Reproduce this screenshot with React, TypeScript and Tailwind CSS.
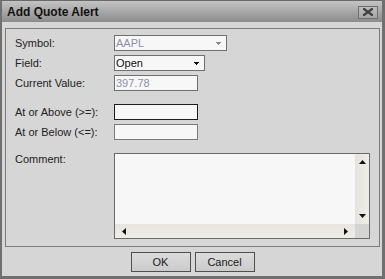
import React from "react";

const font = { fontFamily: '"Liberation Sans", Arial, sans-serif' };

function Arrow({ color }: { color: string }) {
  return (
    <svg width="5" height="3" viewBox="0 0 5 3" className="block" shapeRendering="crispEdges">
      <rect x="0" y="0" width="5" height="1" fill={color} />
      <rect x="1" y="1" width="3" height="1" fill={color} />
      <rect x="2" y="2" width="1" height="1" fill={color} />
    </svg>
  );
}

function Tri({ dir }: { dir: "up" | "down" | "left" | "right" }) {
  const pts: Record<string, string> = {
    up: "0,4 7,4 3.5,0",
    down: "0,0 7,0 3.5,4",
    left: "4,0 4,7 0,3.5",
    right: "0,0 0,7 4,3.5",
  };
  const vertical = dir === "up" || dir === "down";
  return (
    <svg width={vertical ? 7 : 4} height={vertical ? 4 : 7} viewBox={vertical ? "0 0 7 4" : "0 0 4 7"} className="block">
      <polygon points={pts[dir]} fill="#111" />
    </svg>
  );
}

function Row({ label, children }: { label: string; children: React.ReactNode }) {
  return (
    <div className="flex items-center h-[16px]">
      <div className="w-[99px] text-[11px] leading-[13px] text-[#222]">{label}</div>
      {children}
    </div>
  );
}

export default function App() {
  return (
    <div
      className="w-[385px] h-[279px] flex flex-col bg-[#d6d6d6] border-l-2 border-r-[3px] border-b-[3px] border-[#707070] overflow-hidden"
      style={font}
    >
      {/* Title bar */}
      <div className="h-[22px] shrink-0 flex items-center justify-between bg-linear-to-b from-[#c4c4c4] to-[#8c8c8c] border-t border-[#6a6a6a] pl-[5px] pr-[4px]">
        <span className="text-[12px] font-bold text-[#111] leading-[14px]">Add Quote Alert</span>
        <div className="w-[20px] h-[13px] mt-[1px] border border-[#6e6e6e] bg-linear-to-b from-[#bdbdbd] to-[#a6a6a6] flex items-center justify-center">
          <svg width="10" height="8" viewBox="0 0 10 8">
            <path d="M1 1 L9 7 M9 1 L1 7" stroke="#454545" strokeWidth="2.4" strokeLinecap="square" />
          </svg>
        </div>
      </div>

      {/* Group panel */}
      <div className="mt-[6px] ml-[3px] mr-[2px] h-[219px] border border-[#7d7d7d] pl-[9px] pt-[6px] flex flex-col">
        <div className="flex flex-col gap-[4px]">
          <Row label="Symbol:">
            <div className="w-[113px] h-[16px] border border-[#6f6f6f] bg-[#f7f7f7] flex items-center justify-between pl-[1px] pr-[5px]">
              <span className="text-[11px] leading-[13px] text-[#8d8fa8]">AAPL</span>
              <Arrow color="#8a8a8a" />
            </div>
          </Row>
          <Row label="Field:">
            <div className="w-[91px] h-[16px] border border-[#6f6f6f] bg-[#f7f7f7] flex items-center justify-between pl-[1px] pr-[5px]">
              <span className="text-[11px] leading-[13px] text-[#111]">Open</span>
              <Arrow color="#111" />
            </div>
          </Row>
          <Row label="Current Value:">
            <div className="w-[84px] h-[16px] border border-[#6f6f6f] bg-[#f7f7f7] flex items-center pl-[1px]">
              <span className="text-[11px] leading-[13px] text-[#8d8fa8]">397.78</span>
            </div>
          </Row>
        </div>

        <div className="mt-[13px] flex flex-col gap-[4px]">
          <Row label="At or Above (>=):">
            <div className="w-[84px] h-[16px] border border-[#1e1e1e] bg-[#f7f7f7]" />
          </Row>
          <Row label="At or Below (<=):">
            <div className="w-[84px] h-[16px] border border-[#7a7a7a] bg-[#f7f7f7]" />
          </Row>
        </div>

        <div className="mt-[13px] flex items-start">
          <div className="w-[99px] text-[11px] leading-[13px] text-[#222] mt-[0px]">Comment:</div>
          <div className="w-[256px] h-[86px] border border-[#6a6a6a] bg-[#f7f7f7] flex flex-col">
            <div className="flex flex-1">
              <div className="flex-1" />
              <div className="w-[14px] bg-linear-to-r from-[#e6e3de] to-[#efede9] flex flex-col items-center justify-between pt-[6px] pb-[6px]">
                <Tri dir="up" />
                <Tri dir="down" />
              </div>
            </div>
            <div className="flex h-[14px]">
              <div className="flex-1 bg-linear-to-b from-[#e8e5e0] to-[#efede9] flex items-center justify-between pl-[7px] pr-[7px]">
                <Tri dir="left" />
                <Tri dir="right" />
              </div>
              <div className="w-[14px] bg-[#d4d4d4]" />
            </div>
          </div>
        </div>
      </div>

      {/* Buttons */}
      <div className="mt-[5px] flex justify-center gap-[4px] pl-[1px]">
        <button className="w-[60px] h-[20px] border border-[#4f4f4f] bg-linear-to-b from-[#dcdcdc] to-[#cbcbcb] text-[11px] text-[#1a1a1a] leading-[13px]" style={font}>
          OK
        </button>
        <button className="w-[60px] h-[20px] border border-[#4f4f4f] bg-linear-to-b from-[#dcdcdc] to-[#cbcbcb] text-[11px] text-[#1a1a1a] leading-[13px]" style={font}>
          Cancel
        </button>
      </div>
    </div>
  );
}
